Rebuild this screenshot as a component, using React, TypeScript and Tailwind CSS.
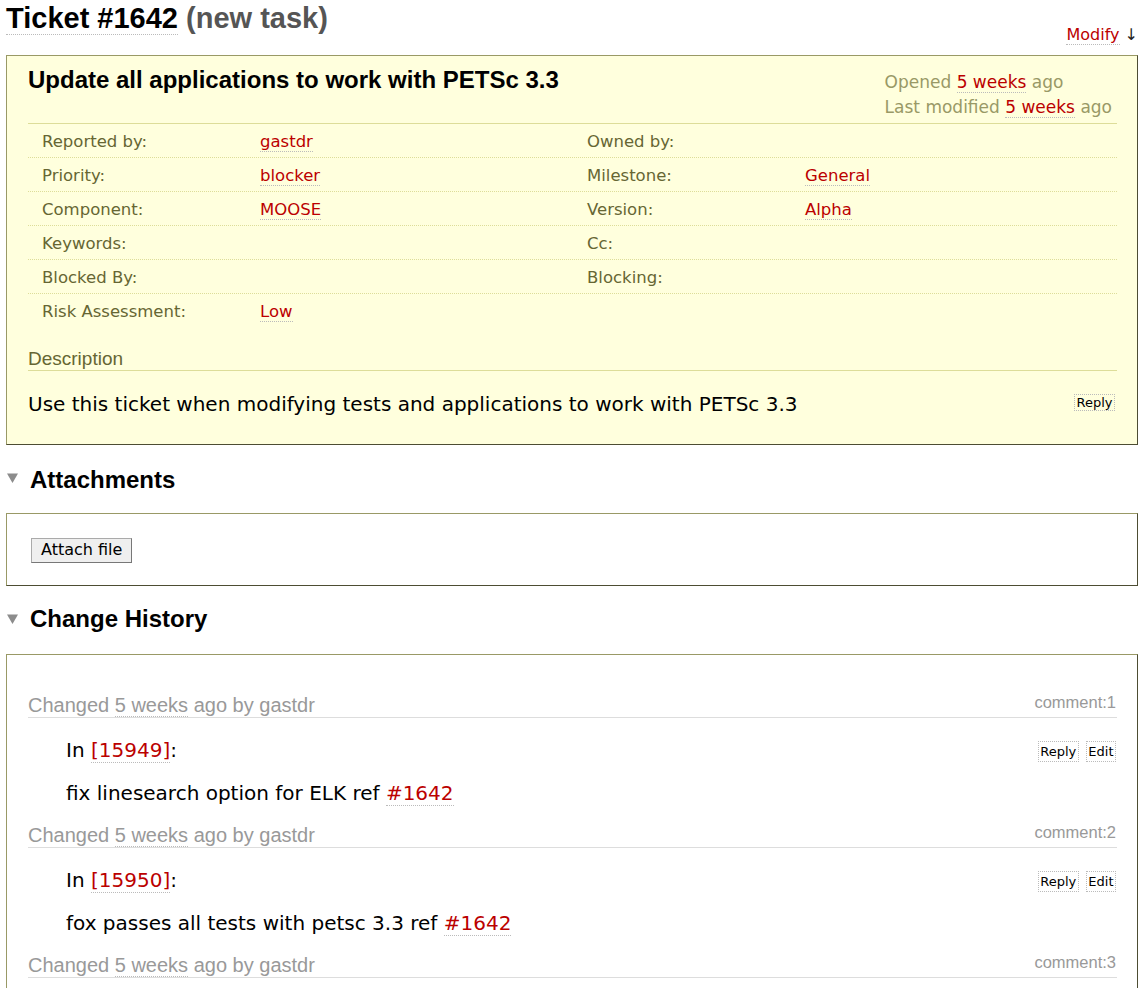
import React from 'react';

const props: [string, string, string, string][] = [
  ['Reported by:', 'gastdr', 'Owned by:', ''],
  ['Priority:', 'blocker', 'Milestone:', 'General'],
  ['Component:', 'MOOSE', 'Version:', 'Alpha'],
  ['Keywords:', '', 'Cc:', ''],
  ['Blocked By:', '', 'Blocking:', ''],
  ['Risk Assessment:', 'Low', '', ''],
];

const changes = [
  { n: 1, rev: '15949', text: 'fix linesearch option for ELK ref ' },
  { n: 2, rev: '15950', text: 'fox passes all tests with petsc 3.3 ref ' },
  { n: 3, rev: '', text: '' },
];

const Link = ({ children }: { children: React.ReactNode }) => (
  <a href="#" className="text-[#b00] border-b border-dotted border-[#bbb]">
    {children}
  </a>
);

const InlineButton = ({ label }: { label: string }) => (
  <span className="px-[1.5px] border border-dotted border-[#bbb] text-[13px] leading-[19px] text-black font-['DejaVu_Sans',Verdana,sans-serif]">
    {label}
  </span>
);

const Triangle = () => (
  <svg width="11" height="10" viewBox="0 0 11 10" className="mt-[9px] mr-[12px] ml-[1px] shrink-0">
    <polygon points="0,0.5 11,0.5 5.5,10" fill="#8c8c8c" />
  </svg>
);

const App: React.FC = () => {
  return (
    <div className="h-screen overflow-hidden bg-white px-[6px] text-black">
      {/* title */}
      <div className="flex justify-between h-[55px]">
        <h1 className="pt-[4px] text-[29px] leading-[29px] font-bold font-['Liberation_Sans',Arial,sans-serif]">
          <span className="border-b border-dotted border-[#bbb]">Ticket #1642</span>{' '}
          <span className="text-[#555]">(new task)</span>
        </h1>
        <div className="pt-[25px] text-[16px] leading-[20px] font-['DejaVu_Sans',Verdana,sans-serif]">
          <a href="#" className="text-[#b00] border-b border-dotted border-[#bbb]">Modify</a>{' '}
          <span className="text-[#222]">↓</span>
        </div>
      </div>

      {/* ticket box */}
      <div className="bg-[#ffd] border border-t-[#996] border-l-[#996] border-r-[#4d4d33] border-b-[#4d4d33] pl-[21px] pr-[20px] pb-[26px]">
        <div className="flex justify-between h-[67px]">
          <h2 className="pt-[10px] text-[24px] leading-[28px] font-bold font-['Liberation_Sans',Arial,sans-serif]">
            Update all applications to work with PETSc 3.3
          </h2>
          <div className="pt-[14px] mr-[5px] text-[17px] leading-[25px] text-[#996] font-['DejaVu_Sans',Verdana,sans-serif]">
            <div>
              Opened <Link>5 weeks</Link> ago
            </div>
            <div>
              Last modified <Link>5 weeks</Link> ago
            </div>
          </div>
        </div>

        <div className="border-t border-[#dd9] text-[16.5px] font-['DejaVu_Sans',Verdana,sans-serif]">
          {props.map((r, i) => (
            <div
              key={r[0]}
              className={`grid grid-cols-[218px_327px_218px_326px] items-center pt-[4px] ${
                i === 0 ? 'h-[33px]' : 'h-[34px] border-t border-dotted border-[#dd9]'
              }`}
            >
              <div className="pl-[14px] text-[#663]">{r[0]}</div>
              <div className="pl-[14px]">{r[1] && <Link>{r[1]}</Link>}</div>
              <div className="pl-[14px] text-[#663]">{r[2]}</div>
              <div className="pl-[14px]">{r[3] && <Link>{r[3]}</Link>}</div>
            </div>
          ))}
        </div>

        <h3 className="mt-[21px] text-[19px] leading-[22px] text-[#663] border-b border-[#dd9] font-['Liberation_Sans',Arial,sans-serif]">
          Description
        </h3>
        <div className="mt-[19px] flex justify-between items-start">
          <p className="text-[20px] leading-[28px] font-['DejaVu_Sans',Verdana,sans-serif]">
            Use this ticket when modifying tests and applications to work with PETSc 3.3
          </p>
          <div className="-mt-[1px] mr-[2px]">
            <InlineButton label="Reply" />
          </div>
        </div>
      </div>

      {/* attachments */}
      <h2 className="mt-[19px] h-[28px] flex items-start text-[24px] leading-[28px] font-bold font-['Liberation_Sans',Arial,sans-serif]">
        <Triangle />
        <span className="mt-[2px]">Attachments</span>
      </h2>
      <div className="mt-[21px] bg-white border border-t-[#996] border-l-[#996] border-r-[#4d4d33] border-b-[#4d4d33] pl-[24px] pt-[23px] pb-[22px]">
        <button className="h-[25px] px-[9px] bg-[#efefef] border border-t-[#aaa] border-l-[#aaa] border-r-[#777] border-b-[#777] text-[16px] leading-[20px] font-['DejaVu_Sans',Verdana,sans-serif]">
          Attach file
        </button>
      </div>

      {/* change history */}
      <h2 className="mt-[19px] h-[28px] flex items-start text-[24px] leading-[28px] font-bold font-['Liberation_Sans',Arial,sans-serif]">
        <Triangle />
        <span className="mt-[0px]">Change History</span>
      </h2>
      <div className="mt-[21px] h-[400px] bg-white border border-t-[#996] border-l-[#996] border-r-[#4d4d33] border-b-[#4d4d33] pl-[21px] pr-[20px] pt-[38px]">
        {changes.map((c) => (
          <div key={c.n} className="mb-[16px]">
            <div className="flex justify-between items-start h-[25px] border-b border-[#ddd] font-['Liberation_Sans',Arial,sans-serif]">
              <div className="text-[20px] leading-[24px] text-[#999]">
                Changed{' '}
                <a href="#" className="border-b border-dotted border-[#bbb]">
                  5 weeks
                </a>{' '}
                ago by gastdr
              </div>
              <div className="mr-[1px] text-[16.5px] leading-[18px] text-[#999]">comment:{c.n}</div>
            </div>
            {c.rev && (
              <div className="pl-[38px] text-[20px] leading-[28px] font-['DejaVu_Sans',Verdana,sans-serif]">
                <div className="mt-[18px] flex justify-between items-start">
                  <p>
                    In <Link>[{c.rev}]</Link>:
                  </p>
                  <div className="mt-[5px] mr-[1px] flex gap-[7px]">
                    <InlineButton label="Reply" />
                    <InlineButton label="Edit" />
                  </div>
                </div>
                <p className="mt-[15px]">
                  {c.text}
                  <Link>#1642</Link>
                </p>
              </div>
            )}
          </div>
        ))}
      </div>
    </div>
  );
};

export default App;
